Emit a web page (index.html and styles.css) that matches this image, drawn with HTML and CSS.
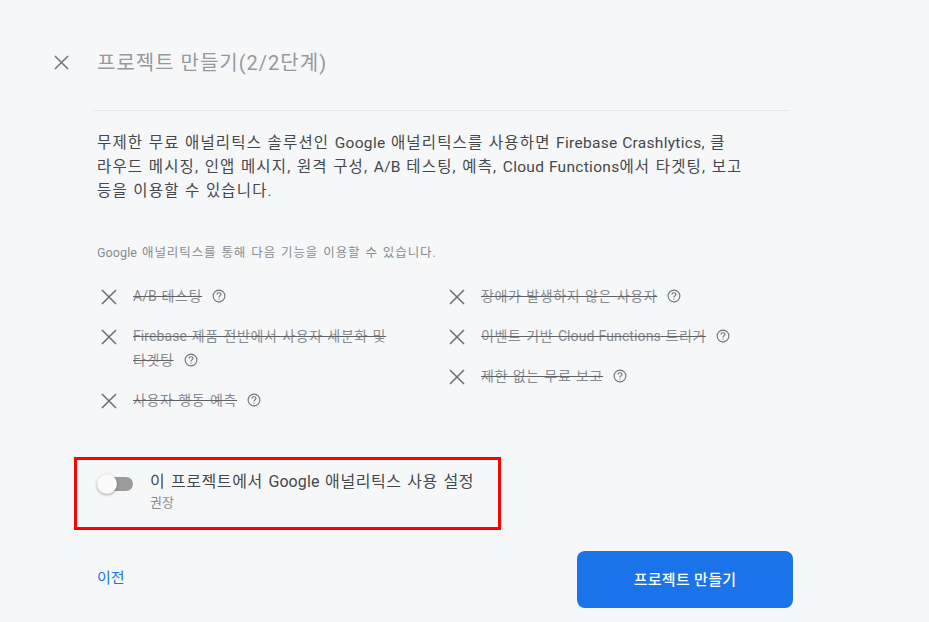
FILE: index.html
```html
<!DOCTYPE html>
<html lang="ko">
<head>
    <meta charset="UTF-8">
    <title>프로젝트 만들기</title>
    <link rel="stylesheet" href="styles.css">
</head>
<body>
    <svg class="defs" width="0" height="0">
        <symbol id="x" viewBox="0 0 16 16"><path d="M1 1 15 15M15 1 1 15" fill="none" stroke="currentColor" stroke-width="1.6"/></symbol>
        <symbol id="help" viewBox="0 0 14 14">
            <circle cx="7" cy="7" r="5.9" fill="none" stroke="currentColor" stroke-width="1.1"/>
            <path d="M5 5.6C5 4.4 5.9 3.7 7 3.7S9 4.4 9 5.4C9 6.6 7 6.8 7 8.5" fill="none" stroke="currentColor" stroke-width="1.1"/>
            <circle cx="7" cy="10.1" r=".7" fill="currentColor"/>
        </symbol>
    </svg>
    <div class="page">
        <header class="top">
            <svg class="close"><use href="#x"/></svg>
            <h1>프로젝트 만들기(2/2단계)</h1>
        </header>
        <div class="content">
            <p class="intro">무제한 무료 애널리틱스 솔루션인 <span class="en">Google</span> 애널리틱스를 사용하면 <span class="en">Firebase Crashlytics,</span> 클<br>라우드 메시징, 인앱 메시지, 원격 구성, <span class="en">A/B</span> 테스팅, 예측, <span class="en">Cloud Functions</span>에서 타겟팅, 보고<br>등을 이용할 수 있습니다.</p>
            <p class="note"><span class="en">Google</span> 애널리틱스를 통해 다음 기능을 이용할 수 있습니다.</p>
            <div class="features">
                <ul>
                    <li><svg class="x"><use href="#x"/></svg><span><s><span class="en">A/B</span> 테스팅</s><svg class="help"><use href="#help"/></svg></span></li>
                    <li><svg class="x"><use href="#x"/></svg><span><s><span class="en">Firebase</span> 제품 전반에서 사용자 세분화 및<br>타겟팅</s><svg class="help"><use href="#help"/></svg></span></li>
                    <li><svg class="x"><use href="#x"/></svg><span><s>사용자 행동 예측</s><svg class="help"><use href="#help"/></svg></span></li>
                </ul>
                <ul>
                    <li><svg class="x"><use href="#x"/></svg><span><s>장애가 발생하지 않은 사용자</s><svg class="help"><use href="#help"/></svg></span></li>
                    <li><svg class="x"><use href="#x"/></svg><span><s>이벤트 기반 <span class="en">Cloud Functions</span> 트리거</s><svg class="help"><use href="#help"/></svg></span></li>
                    <li><svg class="x"><use href="#x"/></svg><span><s>제한 없는 무료 보고</s><svg class="help"><use href="#help"/></svg></span></li>
                </ul>
            </div>
        </div>
        <div class="highlight">
            <div class="toggle"><div class="thumb"></div></div>
            <div>
                <div class="toggle-label">이 프로젝트에서 <span class="en">Google</span> 애널리틱스 사용 설정</div>
                <div class="toggle-sub">권장</div>
            </div>
        </div>
        <footer class="actions">
            <a class="back">이전</a>
            <button class="create">프로젝트 만들기</button>
        </footer>
    </div>
</body>
</html>
```

FILE: styles.css
```css
* { box-sizing: border-box; }
html, body { height: 100%; }
body {
    margin: 0;
    background: #f6f7f9;
    font-family: Roboto, "Noto Sans CJK KR", sans-serif;
    color: #45484b;
    overflow: hidden;
}
.defs { display: block; height: 0; }
.page { padding: 47px 136px 0 54px; }
.top {
    display: flex;
    align-items: center;
    height: 30px;
}
.close { width: 15px; height: 15px; color: #6f7174; flex: none; }
h1 {
    margin: 0 0 0 28px;
    padding-bottom: 2px;
    font-size: 20px;
    font-weight: 400;
    letter-spacing: 1px;
    color: #96999d;
}
.content {
    margin: 33px 4px 0 39px;
    padding: 20px 0 0 4px;
    border-top: 1px solid #e6e7e9;
}
.en { letter-spacing: .1px; }
.intro {
    margin: 0;
    font-size: 15.5px;
    letter-spacing: 1.15px;
    word-spacing: .5px;
    line-height: 24px;
    white-space: nowrap;
}
.intro .en { letter-spacing: .3px; }
.note {
    margin: 40px 0 0;
    font-size: 12.5px;
    letter-spacing: .9px;
    word-spacing: 1px;
    line-height: 20px;
    color: #888c91;
}
.features {
    display: grid;
    grid-template-columns: 348px 1fr;
    margin-top: 21px;
}
ul { list-style: none; margin: 0; padding: 0 0 0 4px; }
li {
    display: flex;
    gap: 16px;
    font-size: 14px;
    letter-spacing: .65px;
    word-spacing: .5px;
    line-height: 24px;
    color: #888c91;
    margin-bottom: 16px;
}
.x { width: 16px; height: 16px; color: #6f7174; flex: none; margin-top: 5px; }
s { text-decoration-color: #5f6368; }
.help { width: 14px; height: 14px; color: #6f7174; margin-left: 10px; vertical-align: -2px; }
.highlight {
    display: flex;
    align-items: flex-start;
    width: 427px;
    height: 73px;
    margin: 29px 0 0 20px;
    padding: 12px 0 0 22px;
    border: 3px solid #f00;
}
.toggle {
    position: relative;
    flex: none;
    width: 34px;
    height: 14px;
    margin-top: 5px;
    border-radius: 7px;
    background: #9b9b9b;
}
.thumb {
    position: absolute;
    left: -2px;
    top: -3px;
    width: 20px;
    height: 20px;
    border-radius: 50%;
    background: #fafafa;
    box-shadow: 0 1px 3px rgba(0, 0, 0, .35);
}
.toggle-label {
    margin-left: 17px;
    font-size: 16px;
    letter-spacing: .6px;
    word-spacing: 1px;
    line-height: 20px;
}
.toggle-sub { margin: 2px 0 0 17px; font-size: 13px; line-height: 18px; color: #888c91; }
.actions {
    display: flex;
    align-items: center;
    justify-content: space-between;
    margin: 21px 0 0 43px;
}
.back { margin-bottom: 7px; font-size: 15px; color: #1a73e8; }
.create {
    width: 216px;
    height: 57px;
    padding-bottom: 3px;
    border: none;
    border-radius: 8px;
    background: #1a73e8;
    color: #fff;
    font: 500 15px Roboto, "Noto Sans CJK KR", sans-serif;
    letter-spacing: .3px;
}
```
